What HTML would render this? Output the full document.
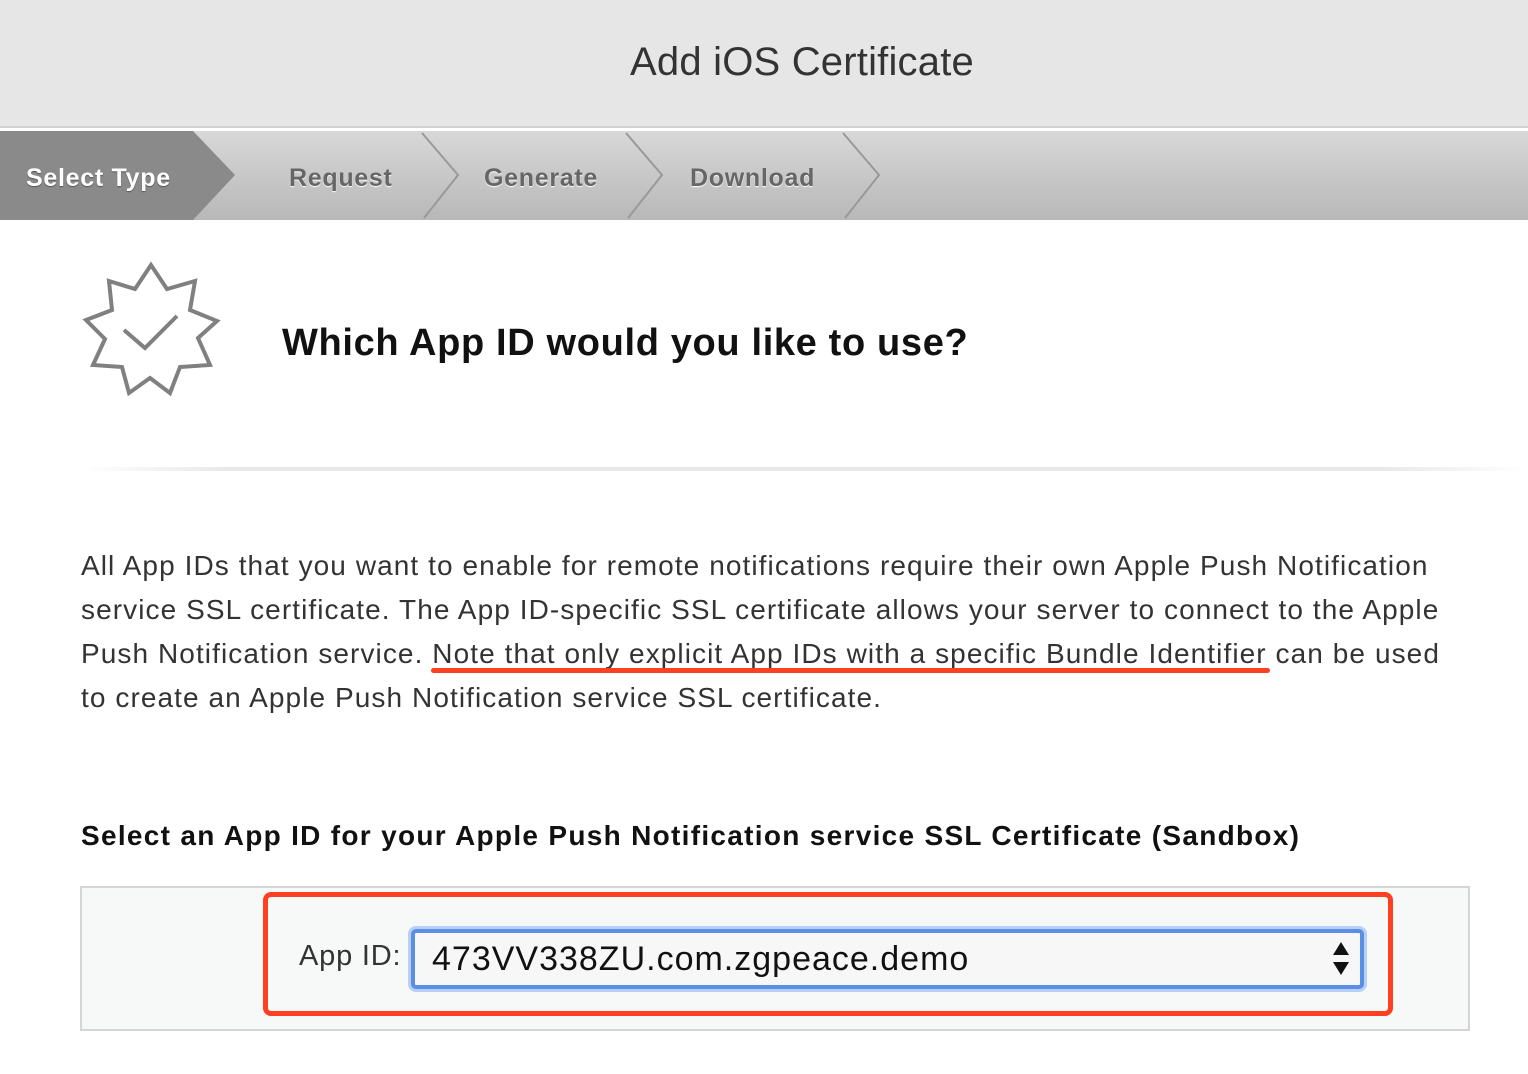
<!DOCTYPE html>
<html><head><meta charset="utf-8"><style>
*{margin:0;padding:0;box-sizing:border-box}
body{width:1528px;height:1074px;background:#fff;font-family:"Liberation Sans",Arial,sans-serif;position:relative;overflow:hidden;color:#333}
.hdr{position:absolute;left:0;top:0;width:1528px;height:128px;background:#e6e6e6;border-bottom:2px solid #d0d0d0}
.hdr h1{position:absolute;left:0;width:1604px;top:40px;text-align:center;font-weight:normal;font-size:40px;color:#333;letter-spacing:0.2px}
.bar{position:absolute;left:0;top:131px;width:1528px;height:89px;background:linear-gradient(#d8d8d8,#b8b8b8)}
.step{position:absolute;top:33px;font-size:25px;font-weight:bold;color:#666;text-shadow:0 1px 1px #fff;letter-spacing:0.7px}
.abs{position:absolute;white-space:nowrap}
.p{position:absolute;left:81px;font-size:28px;color:#333;letter-spacing:1.08px;white-space:nowrap}
.u{position:relative}
.u::after{content:"";position:absolute;left:-1px;right:-3px;bottom:-4px;height:5px;background:#ff4020;border-radius:3px}
</style></head><body>
<div class="hdr"><h1>Add iOS Certificate</h1></div>
<div class="bar">
<svg width="1528" height="89" style="position:absolute;left:0;top:0">
<polygon points="0,0 193,0 235,44 193,89 0,89" fill="#8a8a8a"/>
<polyline points="422,2 458,44 424,87" fill="none" stroke="#999" stroke-width="2"/>
<polyline points="626,2 662,44 628,87" fill="none" stroke="#999" stroke-width="2"/>
<polyline points="843,2 879,44 845,87" fill="none" stroke="#999" stroke-width="2"/>
</svg>
<div class="step" style="left:26px;color:#fff;text-shadow:0 1px 1px #555">Select Type</div>
<div class="step" style="left:289px">Request</div>
<div class="step" style="left:484px">Generate</div>
<div class="step" style="left:690px">Download</div>
</div>
<svg width="240" height="420" style="position:absolute;left:0;top:0">
<polygon points="151,265 167,289 195,281 190,310 217,321 198,338 210,365 180,367 170,393 150,378 129,393 122,367 93,365 105,339 86,320 112,310 109,281 135,289" fill="none" stroke="#808080" stroke-width="4"/>
<polyline points="124,330 145,348 177,316" fill="none" stroke="#808080" stroke-width="4"/>
</svg>
<div class="abs" style="left:282px;top:322px;font-size:38px;font-weight:bold;color:#111;letter-spacing:0.65px">Which App ID would you like to use?</div>
<div style="position:absolute;left:80px;top:467px;width:1448px;height:4px;background:linear-gradient(90deg,#fff,#e8e8e8 10%,#e8e8e8 90%,#fff)"></div>
<div class="p" style="top:550px">All App IDs that you want to enable for remote notifications require their own Apple Push Notification</div>
<div class="p" style="top:594px">service SSL certificate. The App ID-specific SSL certificate allows your server to connect to the Apple</div>
<div class="p" style="top:638px">Push Notification service. <span class="u">Note that only explicit App IDs with a specific Bundle Identifier</span> can be used</div>
<div class="p" style="top:682px">to create an Apple Push Notification service SSL certificate.</div>
<div class="abs" style="left:81px;top:820px;font-size:28px;font-weight:bold;color:#111;letter-spacing:1.3px">Select an App ID for your Apple Push Notification service SSL Certificate (Sandbox)</div>
<div style="position:absolute;left:80px;top:886px;width:1390px;height:145px;background:#f7f8f8;border:2px solid #d5d5d5"></div>
<div style="position:absolute;left:263px;top:892px;width:1130px;height:124px;border:5px solid #ff4020;border-radius:8px"></div>
<div class="abs" style="left:299px;top:940px;font-size:29px;color:#333;letter-spacing:0.8px">App ID:</div>
<div style="position:absolute;left:411px;top:929px;width:953px;height:60px;border:4px solid #5b8fe6;box-shadow:0 0 0 3px #b8d0f5;border-radius:5px;background:#f7f7f7"></div>
<div class="abs" style="left:432px;top:940px;font-size:34px;color:#111;letter-spacing:1px">473VV338ZU.com.zgpeace.demo</div>
<svg width="20" height="36" style="position:absolute;left:1331px;top:941px"><polygon points="10,1 18,14 2,14" fill="#111"/><polygon points="10,34 18,21 2,21" fill="#111"/></svg>
</body></html>
